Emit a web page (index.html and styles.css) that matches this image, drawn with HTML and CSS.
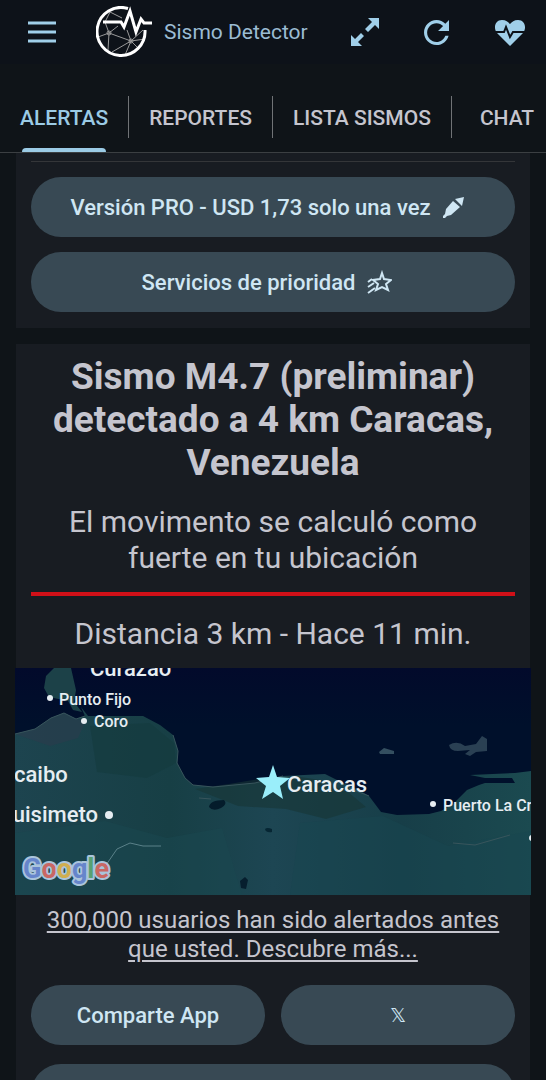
FILE: index.html
```html
<!DOCTYPE html>
<html lang="es">
<head>
    <meta charset="UTF-8">
    <meta name="viewport" content="width=device-width, initial-scale=1.0">
    <title>Sismo Detector</title>
    <link rel="stylesheet" href="styles.css">
</head>
<body>
    <div class="app">
        <header class="header">
            <button class="icon-button" type="button" aria-label="Menú">
                <svg width="28" height="22" viewBox="0 0 28 22"><path d="M0 2h28M0 11h28M0 20h28" stroke="currentColor" stroke-width="3"/></svg>
            </button>
            <svg class="logo" width="58" height="52" viewBox="0 0 58 52" fill="none" stroke="#fff">
                <g stroke="#999" stroke-width="1">
                    <path d="M13 27L9 16M13 27L2 31M13 27l9-7M13 27l-1 17M13 27l22 8M35 35L31 24M35 35l14-2M35 35l8 8M35 35l-6 14M35 35l-19 11M12 5l14 7M35 35l12-11M14 6L9 16"/>
                    <circle cx="13" cy="27" r="2"/>
                    <circle cx="35" cy="35" r="2"/>
                </g>
                <path d="M32 2.500A24 24 0 1 0 49 24" stroke-width="3"/>
                <path d="M7 16h18l3 5 6-16 6 21 5-13 3 4h8" stroke-width="3"/>
            </svg>
            <span class="app-name">Sismo Detector</span>
            <div class="actions">
                <button class="icon-button" type="button" aria-label="Ampliar">
                    <svg width="28" height="28" viewBox="0 0 28 28"><path d="M17 0h11v11l-4-4-7 7-3-3 7-7zM0 17l4 4 6-6 3 3-6 6 4 4H0z" fill="currentColor"/></svg>
                </button>
                <button class="icon-button" type="button" aria-label="Actualizar">
                    <svg width="25" height="25" viewBox="4 4 16 16"><path d="M17.650 6.350C16.200 4.900 14.210 4 12 4c-4.420 0-7.990 3.580-7.990 8s3.570 8 7.990 8c3.730 0 6.840-2.550 7.730-6h-2.080c-.820 2.330-3.040 4-5.650 4-3.310 0-6-2.690-6-6s2.690-6 6-6c1.660 0 3.140.690 4.220 1.780L13 11h7V4z" fill="currentColor"/></svg>
                </button>
                <button class="icon-button" type="button" aria-label="Estado">
                    <svg width="32" height="27" viewBox="0 0 32 27">
                        <path d="M16 27L3 14C-1 9 1 1 8 1c4 0 6 2 8 4 2-2 4-4 8-4 7 0 9 8 5 13z" fill="currentColor"/>
                        <path d="M0 13h10l2-5 4 10 3-5h13" fill="none" stroke="#0d1219" stroke-width="2"/>
                    </svg>
                </button>
            </div>
        </header>

        <nav class="tabs">
            <a class="tab active" href="#alertas">ALERTAS</a>
            <a class="tab" href="#reportes">REPORTES</a>
            <a class="tab" href="#lista">LISTA SISMOS</a>
            <a class="tab" href="#chat">CHAT</a>
        </nav>

        <main class="content">
            <section class="card offers">
                <hr class="divider">
                <button class="pill" type="button">Versión PRO - USD 1,73 solo una vez
                    <svg class="pencil" width="21" height="21" viewBox="0 0 21 21" fill="currentColor"><path d="M12 2l9-2-2 9zM10 4l7 6-9 8-4 1-2 2H0v-2l2-2 1-5z"/></svg>
                </button>
                <button class="pill" type="button">Servicios de prioridad
                    <svg width="25" height="24" viewBox="0 0 25 24" fill="none" stroke="currentColor" stroke-width="2"><path d="M15 3l2 6 7 1-5 4 2 6-6-3-6 3 2-6-5-4 7-1z"/><path d="M1 12l4-3M1 17l6-4M1 23l7-5"/></svg>
                </button>
            </section>

            <section class="card alert">
                <h1>Sismo M4.7 (preliminar) detectado a 4 km Caracas, Venezuela</h1>
                <p class="intensity">El movimento se calculó como fuerte en tu ubicación</p>
                <hr class="severity">
                <p class="distance">Distancia 3 km - Hace 11 min.</p>

                <svg class="map" viewBox="0 0 516 227" preserveAspectRatio="xMidYMid slice" role="img" aria-label="Mapa del sismo">
                    <defs>
                        <linearGradient id="sea" x1="0" y1="0" x2="0" y2="1">
                            <stop offset="0" stop-color="#020a2b"/>
                            <stop offset="0.250" stop-color="#00102b"/>
                        </linearGradient>
                        <linearGradient id="land" x1="0" y1="0" x2="1" y2="0">
                            <stop offset="0" stop-color="#1d444f"/>
                            <stop offset="0.300" stop-color="#173f45"/>
                            <stop offset="0.500" stop-color="#1d4653"/>
                            <stop offset="0.750" stop-color="#173e48"/>
                            <stop offset="1" stop-color="#1b4a50"/>
                        </linearGradient>
                    </defs>
                    <rect width="516" height="227" fill="url(#sea)"/>
                    <!-- coast -->
                    <path d="M0 66L20 61 36 50 49 45 61 51 70 48 66 39 73 48H128L145 57 158 67 163 83 162 95 170 110 178 117 198 119 240 115 268 108 310 106 326 114 344 122 354 128 366 144 382 147 414 146 426 143 438 136 452 122 464 117 470 115H500L497 110H470L455 107 500 105 516 103V227H0z" fill="url(#land)"/>
                    <path d="M31 8l8-8h17l5 22-2 12 8 10-9-2-5-9-19-4-5-9z" fill="#1c4148"/>
                    <path d="M0 66l20-5 16-11 13-5 12 6 10 1-8 18-28 8z" fill="#2c3c4d" opacity=".6"/>
                    <path d="M75 58l60-3 24 20 2 20-29 15-50-6z" fill="#143a3d" opacity=".6"/>
                    <path d="M180 121l34-5 30-5 35-3 26 4 28 12 18 15-40 12-40-10-48-3z" fill="#173535" opacity=".6"/>
                    <path d="M0 165l90-12 62 17 55-10 20 67H0z" fill="#1a4750" opacity=".5"/>
                    <path d="M285 155l83-7 65 30 83-15v64H275z" fill="#174650" opacity=".5"/>
                    <!-- islands -->
                    <path d="M364 84l5-4 10 3v3h-14z" fill="#344f60"/>
                    <path d="M434 77q8-5 16 1l11-2 6-8 5 3v12l-11 1-6 4-5-2 5-4-12 1q-8 0-9-6z" fill="#2a4053"/>
                    <!-- lakes -->
                    <path d="M194 139q1-7 15-7 4 4-3 8-8 4-12-1z" fill="#041c2b"/>
                    <path d="M250 161q2-2 7 0v3q-6 1-7-3z" fill="#062633"/>
                    <path d="M225 213l5-4 3 3-2 9-5-1z" fill="#061e2e"/>
                    <!-- borders and shore lines -->
                    <path d="M91 197l11-16 13-6 13 3h18" fill="none" stroke="#5a8189"/>
                    <path d="M0 66l20-5 16-11 13-5 12 6 9-3M158 67l5 16-1 12 8 15 8 7 20 2 42-4 28-7M184 130l12 1M354 128l-20-8M438 175l22 2 35-10" fill="none" stroke="#38555c"/>
                    <g class="city">
                        <text class="place" x="75" y="8">Curazao</text>
                        <circle cx="35" cy="30" r="3"/><text class="town" x="44" y="37">Punto Fijo</text>
                        <circle cx="69" cy="53" r="3"/><text class="town" x="79" y="59">Coro</text>
                        <text class="place" x="-1" y="114">caibo</text>
                        <text class="place" x="83" y="154" text-anchor="end">uisimeto</text><circle cx="94" cy="147" r="4"/>
                        <text class="place" x="272" y="124">Caracas</text>
                        <circle cx="418" cy="136" r="3"/><text class="town" x="428" y="143">Puerto La Cruz</text>
                        <circle cx="517" cy="170" r="3"/>
                    </g>
                    <path d="M258 97l4 12 13 1-10 8 3 13-10-7-11 7 4-13-10-8 13-1z" fill="#9aeefa"/>
                    <text class="google" x="8" y="210"><tspan fill="#6685cb">G</tspan><tspan fill="#c96763">o</tspan><tspan fill="#d0ae50">o</tspan><tspan fill="#6685cb">g</tspan><tspan fill="#58a171">l</tspan><tspan fill="#c96763">e</tspan></text>
                </svg>

                <a class="more" href="#usuarios">300,000 usuarios han sido alertados antes que usted. Descubre más...</a>
                <div class="share">
                    <button class="pill" type="button">Comparte App</button>
                    <button class="pill x-button" type="button" aria-label="Compartir en X">𝕏</button>
                    <button class="pill wide" type="button" aria-label="Más opciones"></button>
                </div>
            </section>
        </main>
    </div>
</body>
</html>
```

FILE: styles.css
```css
* {
    box-sizing: border-box;
}
body {
    margin: 0;
    font-family: Roboto, "Liberation Sans", sans-serif;
    background-color: #0f1418;
    color: #c5c5ce;
}
button {
    font-family: inherit;
    border: none;
    cursor: pointer;
}
a {
    color: inherit;
}
.app {
    display: flex;
    flex-direction: column;
    height: 100vh;
    overflow: hidden;
}
.header {
    display: flex;
    align-items: center;
    flex-shrink: 0;
    height: 64px;
    padding: 0 20px 0 28px;
    background-color: #0d1219;
    color: #a0cfe9;
}
.icon-button {
    display: flex;
    padding: 0;
    background: none;
    color: inherit;
}
.logo {
    margin-left: 40px;
}
.app-name {
    margin-left: 10px;
    font-size: 21px;
    color: #9bbcd3;
}
.actions {
    display: flex;
    align-items: center;
    gap: 45px;
    margin-left: auto;
}

.tabs {
    display: flex;
    flex-shrink: 0;
    height: 89px;
    padding-top: 32px;
    border-bottom: 1px solid #3b3f42;
    white-space: nowrap;
    overflow: hidden;
}
.tab {
    position: relative;
    height: 42px;
    padding: 0 20px;
    border-right: 1px solid #707376;
    font-size: 21px;
    font-weight: 500;
    line-height: 44px;
    text-decoration: none;
}
.tab:last-child {
    padding-left: 28px;
    border-right: none;
}
.tab.active {
    color: #9bcbe5;
}
.tab.active::after {
    content: "";
    position: absolute;
    left: 22px;
    right: 22px;
    bottom: -15px;
    height: 5px;
    border-radius: 4px 4px 0 0;
    background-color: #9bcbe5;
}

.content {
    flex: 1;
    min-height: 0;
    padding: 0 16px;
    overflow-y: auto;
    scrollbar-width: none;
}
.card {
    padding: 0 15px;
    background-color: #181c22;
}
.offers {
    display: flex;
    flex-direction: column;
    gap: 15px;
    margin-bottom: 16px;
    padding-top: 8px;
    padding-bottom: 16px;
}
.divider {
    width: 100%;
    height: 1px;
    margin: 0;
    border: none;
    background-color: #343639;
}
.pill {
    display: flex;
    align-items: center;
    justify-content: center;
    gap: 12px;
    min-height: 60px;
    padding: 0 16px;
    border-radius: 30px;
    background-color: #384954;
    color: #cfe6f3;
    font-size: 22px;
    font-weight: 500;
}
.offers .pill {
    padding-right: 28px;
}

.alert {
    padding-top: 11px;
    text-align: center;
}
.alert h1 {
    margin: 0 0 20px;
    font-size: 37px;
    line-height: 43px;
}
.alert p {
    margin: 0;
    font-size: 30px;
    line-height: 36px;
}
.severity {
    height: 4px;
    margin: 16px 0 20px;
    border: none;
    background-color: #d01018;
}
.map {
    display: block;
    width: calc(100% + 32px);
    margin: 16px -16px 11px;
    aspect-ratio: 516 / 227;
}
.city {
    fill: #e6edf2;
}
.town {
    font-size: 16px;
    font-weight: 500;
}
.place {
    font-size: 22px;
    font-weight: 500;
}
.google {
    font-size: 27px;
    font-weight: 700;
    stroke: #aac4db;
    stroke-width: 4px;
    stroke-linejoin: round;
    paint-order: stroke;
}
.more {
    display: block;
    font-size: 24px;
    line-height: 29px;
    text-underline-offset: 3px;
}
.share {
    display: grid;
    grid-template-columns: 1fr 1fr;
    gap: 19px 16px;
    margin-top: 21px;
}
.x-button {
    font-family: "DejaVu Sans", sans-serif;
    font-size: 20px;
    font-weight: 400;
}
.wide {
    grid-column: 1 / -1;
}
```
